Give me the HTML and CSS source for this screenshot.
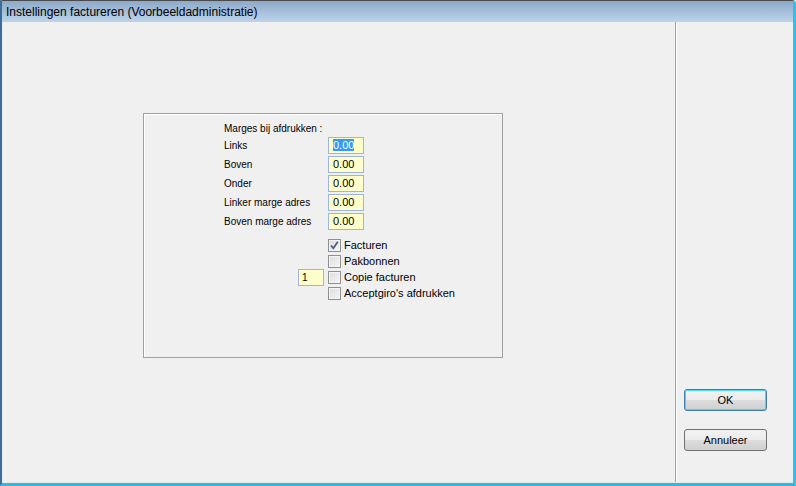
FILE: index.html
```html
<!DOCTYPE html>
<html lang="nl">
<head>
  <meta charset="UTF-8">
  <title>Instellingen factureren</title>
  <link rel="stylesheet" href="styles.css">
</head>
<body>
  <div class="window">
    <div class="titlebar">Instellingen factureren (Voorbeeldadministratie)</div>
    <div class="client">
      <div class="main">
        <div class="group">
          <div class="heading">Marges bij afdrukken :</div>
          <div class="field"><label>Links</label><span class="edit"><span class="sel">0.00</span></span></div>
          <div class="field"><label>Boven</label><span class="edit">0.00</span></div>
          <div class="field"><label>Onder</label><span class="edit">0.00</span></div>
          <div class="field"><label>Linker marge adres</label><span class="edit">0.00</span></div>
          <div class="field"><label>Boven marge adres</label><span class="edit">0.00</span></div>

          <div class="checks">
            <div class="check-row">
              <span class="pre"></span>
              <span class="box checked">
                <svg width="11" height="11" viewBox="0 0 11 11"><path d="M2 5.5 L4.3 8.2 L8.8 1.8" fill="none" stroke="#4d6185" stroke-width="1.8"/></svg>
              </span>
              <span class="check-label">Facturen</span>
            </div>
            <div class="check-row">
              <span class="pre"></span>
              <span class="box"></span>
              <span class="check-label">Pakbonnen</span>
            </div>
            <div class="check-row">
              <span class="pre"><span class="edit small">1</span></span>
              <span class="box"></span>
              <span class="check-label">Copie facturen</span>
            </div>
            <div class="check-row">
              <span class="pre"></span>
              <span class="box"></span>
              <span class="check-label">Acceptgiro's afdrukken</span>
            </div>
          </div>
        </div>
      </div>
      <div class="side">
        <button class="btn default">OK</button>
        <button class="btn">Annuleer</button>
      </div>
    </div>
  </div>
</body>
</html>
```

FILE: styles.css
```css
html, body {
  margin: 0;
  padding: 0;
  background: #f0f0f0;
}
.window {
  width: 796px;
  height: 486px;
  box-sizing: border-box;
  border-top: 1px solid #4a4a4a;
  border-left: 2px solid #3a6c9c;
  border-right: 3px solid #38bde4;
  border-bottom: 3px solid #30b8e0;
  border-top-right-radius: 4px;
  display: flex;
  flex-direction: column;
  font-family: "Liberation Sans", Arial, sans-serif;
  color: #000;
}
.titlebar {
  height: 21px;
  line-height: 22px;
  padding-left: 4px;
  font-size: 12px;
  background: linear-gradient(#8ea9c9, #bcd4eb);
}
.client {
  flex: 1;
  display: flex;
  background: #f0f0f0;
  border-left: 1px solid #e4eef8;
  border-bottom: 1px solid #e8e8e8;
}
.main {
  width: 673px;
  box-sizing: border-box;
  padding: 91px 0 0 140px;
  border-right: 1px solid #a0a0a0;
}
.group {
  width: 360px;
  height: 245px;
  box-sizing: border-box;
  border: 1px solid #a0a0a0;
  box-shadow: inset 1px 1px 0 #fff;
  padding: 7px 0 0 80px;
  font-size: 10px;
}
.heading {
  height: 16px;
  line-height: 15px;
}
.field {
  display: flex;
  align-items: center;
  height: 17px;
  margin-bottom: 2px;
}
.field label {
  width: 104px;
}
.edit {
  display: inline-block;
  width: 36px;
  height: 17px;
  box-sizing: border-box;
  border: 1px solid #9db5dc;
  background: #ffffcc;
  font-size: 11px;
  line-height: 15px;
  padding-left: 4px;
}
.sel {
  background: #3399ff;
  color: #fff;
}
.checks {
  margin-top: 7px;
  font-size: 11px;
}
.check-row {
  display: flex;
  align-items: center;
  height: 16px;
}
.pre {
  width: 104px;
  display: flex;
  justify-content: flex-end;
  padding-right: 4px;
  box-sizing: border-box;
}
.edit.small {
  width: 26px;
  font-size: 10px;
  padding-left: 3px;
}
.box {
  width: 13px;
  height: 13px;
  box-sizing: border-box;
  border: 1px solid #8e8f8f;
  background: linear-gradient(135deg, #dcdcdc, #f6f6f6);
  box-shadow: inset 0 0 0 1px #f4f4f4;
  display: flex;
  align-items: center;
  justify-content: center;
}
.check-label {
  margin-left: 3px;
}
.side {
  flex: 1;
  display: flex;
  flex-direction: column;
  gap: 18px;
  padding: 367px 0 0 7px;
  border-left: 1px solid #fff;
}
.btn {
  width: 83px;
  height: 22px;
  border: 1px solid #707070;
  border-radius: 3px;
  background: linear-gradient(#f2f2f2 0%, #ebebeb 50%, #dddddd 51%, #cfcfcf 100%);
  font-family: "Liberation Sans", Arial, sans-serif;
  font-size: 11px;
  color: #000;
  padding: 0;
}
.btn.default {
  border-color: #3c7fb1;
  box-shadow: inset 0 0 0 1px #48d7f8;
}
```
